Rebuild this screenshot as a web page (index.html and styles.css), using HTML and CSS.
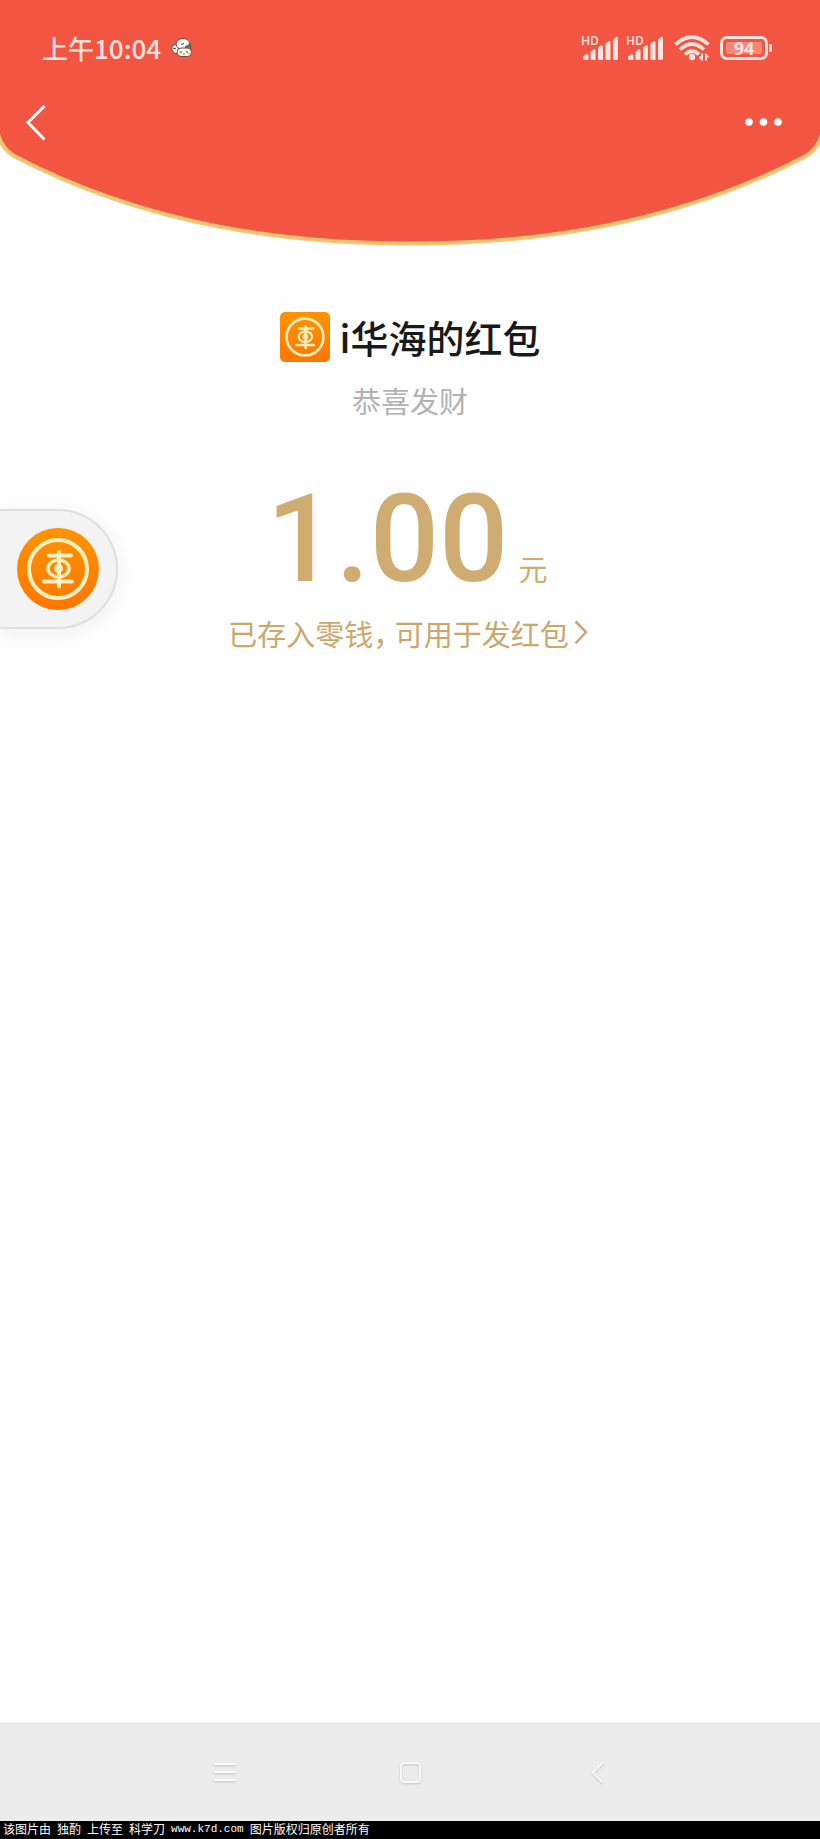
FILE: index.html
```html
<!DOCTYPE html>
<html lang="zh-CN">
<head>
<meta charset="utf-8">
<meta name="viewport" content="width=device-width, initial-scale=1">
<title>红包</title>
<link rel="stylesheet" href="styles.css">
</head>
<body>
<svg width="0" height="0" class="defs" aria-hidden="true">
  <defs>
    <linearGradient id="orange" x1="0" y1="0" x2="0" y2="1">
      <stop offset="0" stop-color="#ff9400"/>
      <stop offset="1" stop-color="#ff7600"/>
    </linearGradient>
    <symbol id="emblem" viewBox="0 0 82 82">
      <g fill="none" stroke="#fff0c0" stroke-width="4" stroke-linecap="round">
        <circle cx="41" cy="41" r="29"/>
        <path d="M32 27.500H54M27 53.500H55M42 24V58.500"/>
        <ellipse cx="41.500" cy="40.500" rx="10.500" ry="8.500" stroke-width="3.500"/>
      </g>
      <circle cx="41.500" cy="40.500" r="4.500" fill="#fff0c0"/>
    </symbol>
    <symbol id="signal" viewBox="0 0 40 26">
      <path fill="#ffe3df" d="M2 21.500l3.500-2.500q2 0 2 1.500v4.500H3.500Q2 25 2 23.500zM9.500 17L13 14q1.500 0 1.500 1.500V25H11Q9.500 25 9.500 23.500zM17 12.500l3.500-2.500q1.500 0 1.500 1.500V25H18.500Q17 25 17 23.500zM24.500 8.500L28 6q1.500 0 1.500 1.500V25H26q-1.500 0-1.500-1.500zM32 5L35.500 1.500q1.500 0 1.500 1.500v20.500q0 1.500-1.500 1.500h-2q-1.500 0-1.500-1.500z"/>
    </symbol>
  </defs>
</svg>
<div class="page">
  <header class="header">
    <svg class="header-bg" viewBox="0 0 820 250" preserveAspectRatio="none" aria-hidden="true">
      <path fill="#f25542" stroke="#f3c573" stroke-width="4" d="M-3 -4V130C-1 141 4 150 14 156C150 227 290 243.500 410 243.500C530 243.500 670 227 806 156C816 150 821 141 823 130V-4Z"/>
    </svg>
    <div class="status">
      <span class="time">上午10:04</span>
      <svg class="doll" viewBox="0 0 22 20" aria-hidden="true">
        <g stroke="#6b4a35" stroke-width="1">
          <path fill="#fff" d="M7 8Q4 5 1 8Q0 12 3 15L8 16Z"/>
          <ellipse cx="12" cy="6" rx="7" ry="5.500" fill="#fff"/>
          <path fill="#5e7d84" d="M14 9l5-3 1 6z"/>
          <rect x="6" y="10" width="14.500" height="8.500" rx="4" fill="#fff8e8"/>
        </g>
        <path d="M10 6q2 1 3-1M2 10l3 1M10 13v2M16 13v2" stroke="#4a3528" fill="none"/>
        <circle cx="13" cy="16" r="1" fill="#e89078"/><circle cx="18" cy="15.500" r="1" fill="#e8b078"/>
      </svg>
      <div class="indicators">
        <div class="signal"><svg><use href="#signal"/></svg><span>HD</span></div>
        <div class="signal"><svg><use href="#signal"/></svg><span>HD</span></div>
        <svg class="wifi" viewBox="0 0 36 28" aria-hidden="true">
          <g fill="none" stroke="#ffe3df" stroke-width="3.600">
            <path d="M1.500 10.500Q18-4.500 34.500 10.500M6 15.500Q18 4.500 30 15.500M11 20.500Q18 13.500 25 20.500"/>
          </g>
          <circle cx="18" cy="23" r="3.200" fill="#ffe3df"/>
          <path fill="#ffe3df" d="M29 19.500V26.500H27L24.500 22.500H27V19.500zM31 26.500V19.500h1.500l2.500 4H33v3z"/>
        </svg>
        <div class="battery"><span>94</span></div>
      </div>
    </div>
    <nav class="topbar">
      <button class="icon-btn" aria-label="返回">
        <svg width="22" height="38" viewBox="0 0 22 38"><path d="M19.500 3L3 19.500L19.500 36.500" fill="none" stroke="#fff" stroke-width="3"/></svg>
      </button>
      <button class="icon-btn" aria-label="更多">
        <svg width="38" height="10" viewBox="0 0 38 10" fill="#fff"><circle cx="5" cy="5" r="3.800"/><circle cx="19.500" cy="5" r="3.800"/><circle cx="34" cy="5" r="3.800"/></svg>
      </button>
    </nav>
  </header>

  <main class="content">
    <h1 class="sender">
      <svg class="avatar" viewBox="0 0 50 50" aria-hidden="true"><rect width="50" height="50" rx="5" fill="url(#orange)"/><use href="#emblem" x="-1" y="-1" width="52" height="52"/></svg>
      <span>i华海的红包</span>
    </h1>
    <p class="wish">恭喜发财</p>
    <p class="amount"><span class="value">1.00</span><span class="unit">元</span></p>
    <a class="balance" href="#">
      <span>已存入零钱<span class="comma">，</span>可用于发红包</span>
      <svg width="14" height="26" viewBox="0 0 14 26" aria-hidden="true"><path d="M1.500 1.500L12 12L1.500 23.500" fill="none" stroke="#c9a76d" stroke-width="2.500"/></svg>
    </a>
    <button class="floating" aria-label="车">
      <svg width="82" height="82" viewBox="0 0 82 82"><circle cx="41" cy="41" r="41" fill="url(#orange)"/><use href="#emblem" width="82" height="82"/></svg>
    </button>
  </main>

  <nav class="sysnav">
    <button class="icon-btn" aria-label="菜单"><svg width="24" height="24" viewBox="0 0 24 24"><path d="M2 4h21M2 12h21M2 20h21"/></svg></button>
    <button class="icon-btn" aria-label="主页"><svg width="24" height="24" viewBox="0 0 24 24"><rect x="3" y="3" width="19" height="19" rx="3.500"/></svg></button>
    <button class="icon-btn" aria-label="后退"><svg width="24" height="24" viewBox="0 0 24 24"><path d="M19 2L8.500 12.500L19 22.500"/></svg></button>
  </nav>
  <footer class="credit">
    <span>该图片由</span><span>独酌</span><span>上传至</span><span>科学刀</span><span class="site">www.k7d.com</span><span>图片版权归原创者所有</span>
  </footer>
</div>
</body>
</html>
```
FILE: styles.css
```css
* {
  box-sizing: border-box;
}

body {
  margin: 0;
  background: #fefefe;
  font-family: "Noto Sans CJK SC", sans-serif;
}

h1,
p {
  margin: 0;
  font-weight: 400;
}

svg {
  display: block;
  flex: none;
}

.defs {
  position: absolute;
}

.page {
  display: flex;
  flex-direction: column;
  min-height: 100vh;
}

.icon-btn {
  display: flex;
  align-items: center;
  justify-content: center;
  padding: 0;
  border: 0;
  background: none;
}

.header {
  position: relative;
  height: 250px;
  padding-top: 33px;
}

.header-bg {
  position: absolute;
  inset: 0;
  width: 100%;
  height: 100%;
}

.status {
  position: relative;
  display: flex;
  align-items: center;
  height: 30px;
  padding: 0 48px 0 42px;
  color: #ffe3df;
}

.time {
  font-size: 26px;
  font-weight: 500;
  line-height: 28px;
}

.doll {
  width: 22px;
  height: 20px;
  margin-left: 10px;
}

.indicators {
  display: flex;
  align-items: center;
  margin-left: auto;
}

.signal {
  position: relative;
  width: 40px;
  height: 26px;
  margin-right: 5px;
}

.signal svg {
  width: 40px;
  height: 26px;
}

.signal span {
  position: absolute;
  top: 0;
  left: 0;
  font: 600 12px/12px "Open Sans", sans-serif;
}

.wifi {
  width: 36px;
  height: 28px;
  margin: 0 10px 0 3px;
}

.battery {
  position: relative;
  width: 48px;
  height: 24px;
  margin-right: 4px;
  padding: 3px;
  border: 3px solid #ffe3df;
  border-radius: 7px;
}

.battery::after {
  content: "";
  position: absolute;
  top: 5px;
  right: -7px;
  width: 3px;
  height: 8px;
  border-radius: 0 2px 2px 0;
  background: #ffe3df;
}

.battery span {
  display: block;
  height: 12px;
  border-radius: 2px;
  background: #f98578;
  font: 700 18px/12px "Open Sans", sans-serif;
  text-align: center;
}

.topbar {
  position: relative;
  display: flex;
  align-items: center;
  justify-content: space-between;
  height: 38px;
  margin-top: 40px;
  padding: 0 38px 0 25px;
}

.content {
  position: relative;
  display: flex;
  flex: 1;
  flex-direction: column;
  align-items: center;
  padding-top: 62px;
}

.sender {
  display: flex;
  align-items: center;
  gap: 10px;
  color: #191919;
  font-size: 38px;
  font-weight: 500;
  line-height: 50px;
}

.avatar {
  width: 50px;
  height: 50px;
}

.wish {
  margin-top: 18px;
  color: #b2b2b2;
  font-size: 29px;
  line-height: 40px;
}

.amount {
  display: flex;
  align-items: baseline;
  gap: 10px;
  margin-top: 58px;
  padding-right: 6px;
  color: #cfac71;
}

.value {
  font: 500 122px/124px Roboto, sans-serif;
}

.unit {
  font-size: 29px;
  line-height: 40px;
}

.balance {
  display: flex;
  align-items: center;
  gap: 5px;
  margin-top: 11px;
  padding-right: 4px;
  color: #c9a76d;
  font-size: 29px;
  line-height: 40px;
  text-decoration: none;
}

.comma {
  padding-right: 7px;
  font-feature-settings: "halt";
}

.floating {
  position: absolute;
  top: 259px;
  left: 0;
  display: flex;
  align-items: center;
  height: 120px;
  padding: 0 17px;
  border: 2px solid #dfdfdf;
  border-left: 0;
  border-radius: 0 60px 60px 0;
  background: #f3f3f3;
  box-shadow: 0 4px 20px rgba(0, 0, 0, 0.06);
}

.sysnav {
  display: grid;
  grid-template-columns: repeat(3, 186px);
  justify-content: center;
  height: 99px;
  border-top: 1px solid #f2f2f2;
  background: #ececec;
}

.sysnav svg {
  fill: none;
  stroke: #f9f9f9;
  stroke-width: 2;
  filter: drop-shadow(0 1px 1px rgba(0, 0, 0, 0.18));
}

.credit {
  display: flex;
  gap: 6px;
  height: 18px;
  padding-left: 3px;
  background: #000;
  color: #fff;
  font-size: 12px;
  line-height: 16px;
  white-space: nowrap;
}

.site {
  font-family: "Liberation Mono", monospace;
  font-size: 11px;
}
```
